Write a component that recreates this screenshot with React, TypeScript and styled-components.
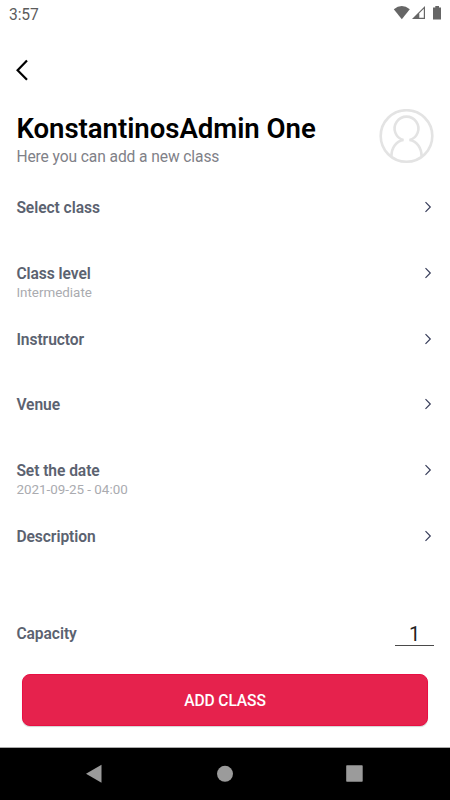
import React from 'react';
import styled, { createGlobalStyle } from 'styled-components';

const GlobalStyle = createGlobalStyle`
  * { box-sizing: border-box; }
  body { margin: 0; background: #fff; font-family: Roboto, sans-serif; }
`;

const Screen = styled.div`
  width: 450px;
  height: 800px;
  display: flex;
  flex-direction: column;
  overflow: hidden;
  background: #fff;
`;

const StatusBar = styled.header`
  height: 28px;
  flex: none;
  display: flex;
  justify-content: space-between;
  padding: 0 0 0 9px;
`;

const Clock = styled.span`
  font-size: 15.6px;
  letter-spacing: -0.1px;
  line-height: 30px;
  color: #5c5c5c;
`;

const TopBar = styled.nav`
  height: 81px;
  flex: none;
  padding: 30px 0 0 14px;
`;

const BackButton = styled.button`
  display: block;
  width: 16px;
  height: 24px;
  padding: 0;
  border: 0;
  background: none;
`;

const Profile = styled.section`
  height: 65px;
  flex: none;
  display: flex;
  justify-content: space-between;
  padding: 0 16px 0 16.4px;
`;

const Title = styled.h1`
  margin: 3px 0 0;
  font-size: 27.6px;
  letter-spacing: -0.04px;
  line-height: 33px;
  font-weight: 600;
  color: #000;
  white-space: nowrap;
`;

const Subtitle = styled.p`
  margin: 1px 0 0;
  font-size: 15.6px;
  letter-spacing: -0.1px;
  line-height: 23px;
  color: #7f8188;
`;

const Options = styled.ul`
  list-style: none;
  margin: 0;
  padding: 0 16px 0 16.4px;
  flex: none;
`;

const Option = styled.li`
  height: 65.8px;
  display: flex;
  justify-content: space-between;
  padding-top: 23px;
`;

const Label = styled.div`
  font-size: 15.6px;
  letter-spacing: -0.06px;
  line-height: 23px;
  font-weight: 600;
  color: #5b6270;
`;

const Value = styled.div`
  font-size: 13.4px;
  line-height: 16px;
  margin-top: -1px;
  color: #aaabb0;
`;

const Chevron = styled.svg`
  width: 8px;
  height: 12px;
  margin: 4px 2px 0 0;
`;

const CapacityRow = styled.div`
  height: 105px;
  flex: none;
  display: flex;
  justify-content: space-between;
  align-items: flex-start;
  padding: 54px 16px 0 16.4px;
`;

const CapacityInput = styled.div`
  width: 39px;
  height: 23px;
  border-bottom: 1px solid #4a4a4a;
  text-align: center;
  font-size: 20px;
  line-height: 22px;
  color: #222;
`;

const SubmitButton = styled.button`
  width: 406px;
  height: 52px;
  flex: none;
  margin: 0 0 0 22px;
  padding: 3px 0 0;
  border: 1px solid #e80f43;
  border-radius: 8px;
  background: #e6224d;
  color: #fff;
  font-family: inherit;
  font-size: 15.6px;
  letter-spacing: -0.12px;
  font-weight: 500;
  box-shadow: 0 1px 1px rgba(0, 0, 0, 0.18);
`;

const NavigationBar = styled.footer`
  height: 53px;
  flex: none;
  margin-top: auto;
  border-top: 1px solid #aaa;
  background: #000;
`;

const options: { label: string; value?: string }[] = [
  { label: 'Select class' },
  { label: 'Class level', value: 'Intermediate' },
  { label: 'Instructor' },
  { label: 'Venue' },
  { label: 'Set the date', value: '2021-09-25 - 04:00' },
  { label: 'Description' },
];

export default function App() {
  return (
    <Screen>
      <GlobalStyle />
      <StatusBar>
        <Clock>3:57</Clock>
        <svg width="60" height="28" viewBox="390 0 60 28">
          <path d="M393.8 9.2Q401.8 3 409.8 9.2L401.8 19.2Z" fill="#666" />
          <path d="M412 19L425 6V19Z" fill="#666" />
          <path d="M419.3 13.3L423.8 8.8V17.8H419.3Z" fill="#fff" />
          <path d="M435.3 6H439V7.5H441V19.5H433V7.5H435.3Z" fill="#666" />
        </svg>
      </StatusBar>
      <TopBar>
        <BackButton aria-label="Back">
          <svg width="16" height="24" viewBox="0 0 16 24">
            <path d="M13 2.5L3.6 12.2L13 21.8" fill="none" stroke="#000" strokeWidth="2.2" />
          </svg>
        </BackButton>
      </TopBar>
      <Profile>
        <div>
          <Title>KonstantinosAdmin One</Title>
          <Subtitle>Here you can add a new class</Subtitle>
        </div>
        <svg width="55" height="55" viewBox="0 0 55 55" fill="none" stroke="#e3e3e3" strokeWidth="2.6">
          <circle cx="27.5" cy="27" r="25.8" />
          <path d="M12.4 47.5C12.4 38.5 17.5 32 24.5 31A11.9 11.9 0 1 1 30.5 31C37.5 32 42.6 38.5 42.6 47.5" />
        </svg>
      </Profile>
      <Options>
        {options.map(({ label, value }) => (
          <Option key={label}>
            <div>
              <Label>{label}</Label>
              {value && <Value>{value}</Value>}
            </div>
            <Chevron viewBox="0 0 8 12">
              <path d="M1.5 1.2L6.3 6L1.5 10.8" fill="none" stroke="#353b58" strokeWidth="1.15" />
            </Chevron>
          </Option>
        ))}
      </Options>
      <CapacityRow>
        <Label>Capacity</Label>
        <CapacityInput>1</CapacityInput>
      </CapacityRow>
      <SubmitButton>ADD CLASS</SubmitButton>
      <NavigationBar>
        <svg width="450" height="52" viewBox="0 748 450 52" fill="#9b9b9b">
          <path d="M86 773.7L101.5 764.8V782.8Z" />
          <circle cx="225" cy="773.8" r="8" />
          <rect x="346.2" y="765.3" width="16.5" height="16.5" rx="0.7" />
        </svg>
      </NavigationBar>
    </Screen>
  );
}
